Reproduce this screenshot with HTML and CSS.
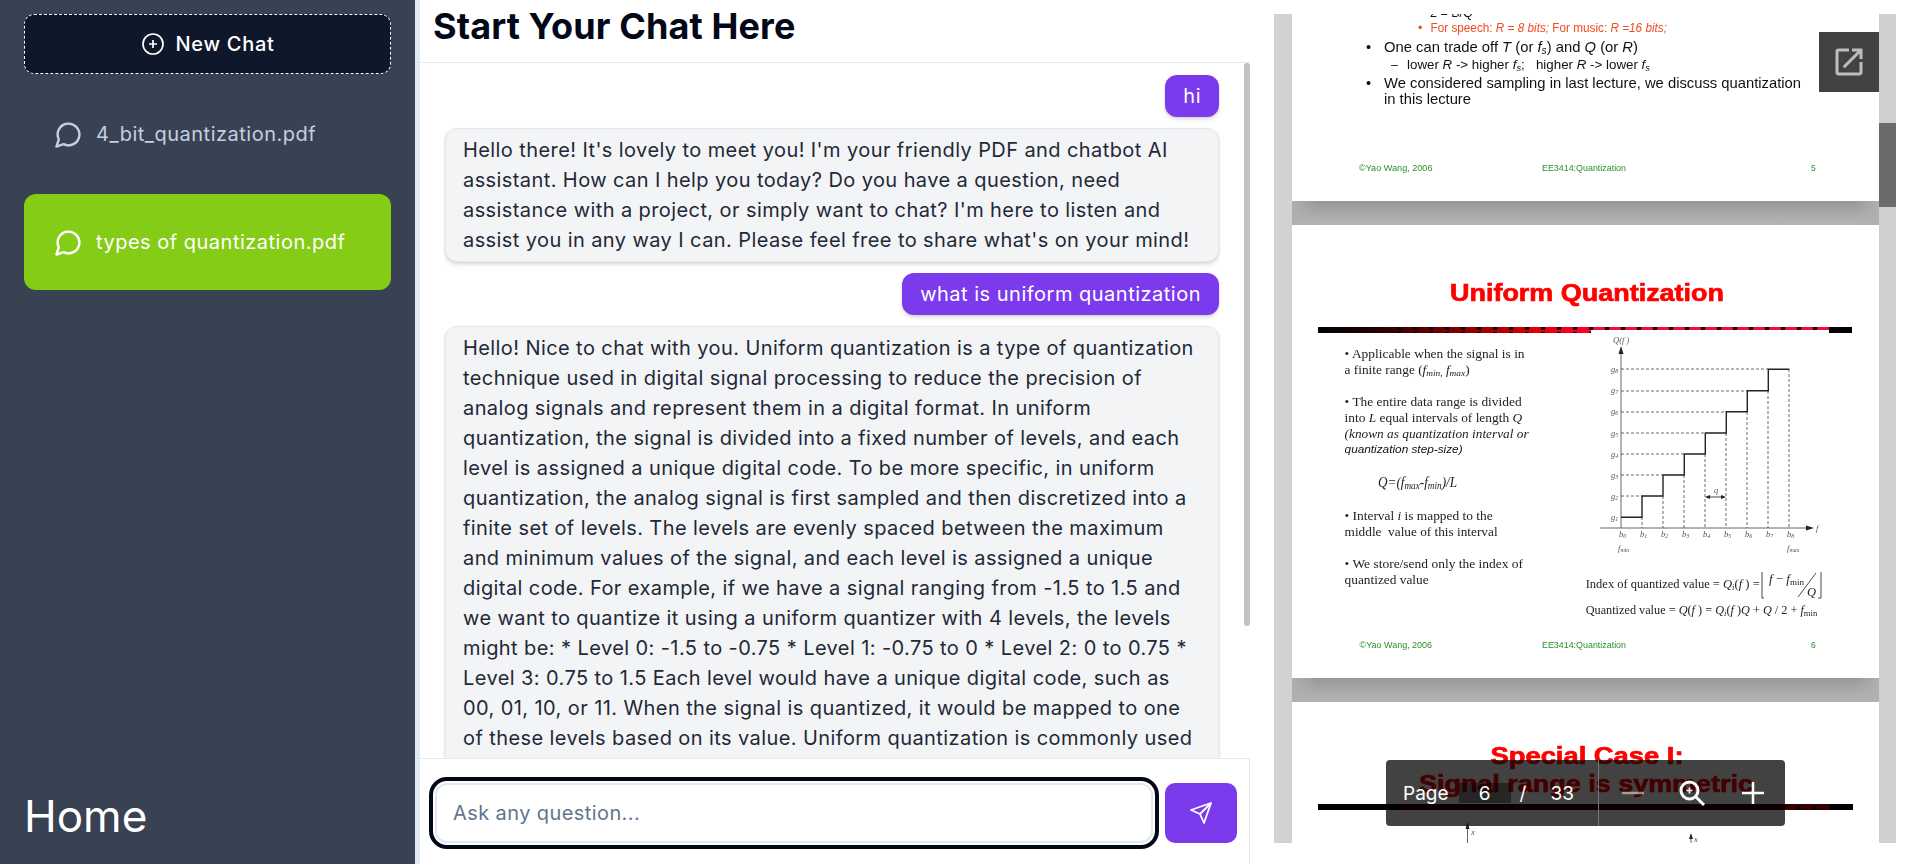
FILE: index.html
```html
<!DOCTYPE html>
<html lang="en">
<head>
    <meta charset="UTF-8">
    <meta name="viewport" content="width=device-width, initial-scale=1.0">
    <title>Chat with PDF</title>
    <link rel="stylesheet" href="styles.css">
</head>
<body>
    <aside class="sidebar">
        <div>
            <button type="button" class="new-chat">
                <svg class="new-chat-icon" viewBox="0 0 24 24"><circle cx="12" cy="12" r="10"/><path d="M8 12h8M12 8v8"/></svg>
                New Chat
            </button>
            <div class="file-item">
                <svg class="file-icon" viewBox="0 0 24 24"><path d="M7.9 20A9 9 0 1 0 4 16.1L2 22Z"/></svg>
                <span>4_bit_quantization.pdf</span>
            </div>
            <div class="file-item active">
                <svg class="file-icon" viewBox="0 0 24 24"><path d="M7.9 20A9 9 0 1 0 4 16.1L2 22Z"/></svg>
                <span>types of quantization.pdf</span>
            </div>
        </div>
        <a class="home-link">Home</a>
    </aside>

    <main class="chat">
        <h1 class="chat-title">Start Your Chat Here</h1>
        <div class="messages">
            <div class="msg user">hi</div>
            <div class="msg bot">Hello there! It's lovely to meet you! I'm your friendly PDF and chatbot AI assistant. How can I help you today? Do you have a question, need assistance with a project, or simply want to chat? I'm here to listen and assist you in any way I can. Please feel free to share what's on your mind!</div>
            <div class="msg user">what is uniform quantization</div>
            <div class="msg bot long">Hello! Nice to chat with you. Uniform quantization is a type of quantization technique used in digital signal processing to reduce the precision of analog signals and represent them in a digital format. In uniform quantization, the signal is divided into a fixed number of levels, and each level is assigned a unique digital code. To be more specific, in uniform quantization, the analog signal is first sampled and then discretized into a finite set of levels. The levels are evenly spaced between the maximum and minimum values of the signal, and each level is assigned a unique digital code. For example, if we have a signal ranging from -1.5 to 1.5 and we want to quantize it using a uniform quantizer with 4 levels, the levels might be: * Level 0: -1.5 to -0.75 * Level 1: -0.75 to 0 * Level 2: 0 to 0.75 * Level 3: 0.75 to 1.5 Each level would have a unique digital code, such as 00, 01, 10, or 11. When the signal is quantized, it would be mapped to one of these levels based on its value. Uniform quantization is commonly used</div>
            <div class="msg-scroll-thumb"></div>
        </div>
        <form class="ask-bar">
            <input type="text" class="ask-input" placeholder="Ask any question...">
            <button type="button" class="send-btn">
                <svg viewBox="0 0 24 24"><path d="m22 2-7 20-4-9-9-4Z"/><path d="M22 2 11 13"/></svg>
            </button>
        </form>
    </main>

    <section class="viewer">
        <div class="viewer-pages">
            <div class="pages">
                <svg class="slide" viewBox="1292 -252 587 453">
                    <g class="slide-ink">
                        <text x="1430" y="16.5" class="arial s12">2 = B/Q</text>
                        <text x="1418" y="32" class="arial s12 orange">•</text>
                        <text x="1430.5" y="32" class="arial s12 orange" textLength="236.5" lengthAdjust="spacingAndGlyphs">For speech: <tspan class="it">R = 8 bits;</tspan> For music: <tspan class="it">R =16 bits;</tspan></text>
                        <text x="1366" y="52" class="arial s14">•</text>
                        <text x="1384" y="52" class="arial s14" textLength="254" lengthAdjust="spacingAndGlyphs">One can trade off <tspan class="it">T</tspan> (or <tspan class="it">f</tspan><tspan class="it sub" dy="2">s</tspan><tspan dy="-2">)</tspan> and <tspan class="it">Q</tspan> (or <tspan class="it">R</tspan>)</text>
                        <text x="1391" y="69" class="arial s12">–</text>
                        <text x="1407" y="69" class="arial s12 keep" textLength="243" lengthAdjust="spacingAndGlyphs">lower <tspan class="it">R</tspan> -&gt; higher <tspan class="it">f</tspan><tspan class="it sub" dy="2">s</tspan><tspan dy="-2">;   higher </tspan><tspan class="it">R</tspan> -&gt; lower <tspan class="it">f</tspan><tspan class="it sub" dy="2">s</tspan></text>
                        <text x="1366" y="88" class="arial s14">•</text>
                        <text x="1384" y="88" class="arial s14" textLength="417" lengthAdjust="spacingAndGlyphs">We considered sampling in last lecture, we discuss quantization</text>
                        <text x="1384" y="104" class="arial s14" textLength="87" lengthAdjust="spacingAndGlyphs">in this lecture</text>
                        <text x="1359" y="171" class="arial s8 green" textLength="73.5" lengthAdjust="spacingAndGlyphs">©Yao Wang, 2006</text>
                        <text x="1542" y="171" class="arial s8 green" textLength="84" lengthAdjust="spacingAndGlyphs">EE3414:Quantization</text>
                        <text x="1811" y="171" class="arial s8 green">5</text>
                    </g>
                </svg>
                <div class="page-gap"></div>

                <svg class="slide" viewBox="1292 225 587 453">
                    <defs>
                        <linearGradient id="ruleFade" x1="0" x2="1" y1="0" y2="0">
                            <stop offset="0" stop-color="#000"/>
                            <stop offset="0.2" stop-color="#200000"/>
                            <stop offset="0.55" stop-color="#8a0000"/>
                            <stop offset="0.8" stop-color="#e00000"/>
                            <stop offset="1" stop-color="#ff0030"/>
                        </linearGradient>
                        <pattern id="ruleDots" width="16" height="6" patternUnits="userSpaceOnUse">
                            <circle cx="7" cy="4" r="2.3" fill="#0a0014"/>
                        </pattern>
                    </defs>
                    <rect x="1318" y="327" width="273" height="6" fill="url(#ruleFade)"/>
                    <rect x="1390" y="327" width="201" height="6" fill="url(#ruleDots)"/>
                    <rect x="1591" y="327" width="238" height="3" fill="#f0103a"/>
                    <rect x="1591" y="327" width="238" height="3" fill="url(#ruleDots)"/>
                    <rect x="1829" y="327" width="23" height="6" fill="#000"/>
                    <g class="slide-ink">
                        <text x="1587" y="301" class="title" text-anchor="middle" textLength="274" lengthAdjust="spacingAndGlyphs">Uniform Quantization</text>

                        <text x="1344.6" y="358" class="times" textLength="180" lengthAdjust="spacingAndGlyphs">• Applicable when the signal is in</text>
                        <text x="1344.6" y="374" class="times" textLength="125" lengthAdjust="spacingAndGlyphs">a finite range (<tspan class="it">f</tspan><tspan class="it sub" dy="2">min,</tspan><tspan class="it" dy="-2"> f</tspan><tspan class="it sub" dy="2">max</tspan><tspan dy="-2">)</tspan></text>
                        <text x="1344.6" y="406" class="times" textLength="177" lengthAdjust="spacingAndGlyphs">• The entire data range is divided</text>
                        <text x="1344.6" y="422" class="times" textLength="177.5" lengthAdjust="spacingAndGlyphs">into <tspan class="it">L</tspan> equal intervals of length <tspan class="it">Q</tspan></text>
                        <text x="1344.6" y="438" class="times it" textLength="184" lengthAdjust="spacingAndGlyphs">(known as quantization interval or</text>
                        <text x="1344.6" y="453" class="arial s11 it" textLength="118" lengthAdjust="spacingAndGlyphs">quantization step-size)</text>
                        <text x="1378" y="487" class="times s14 it" textLength="79" lengthAdjust="spacingAndGlyphs">Q=(f<tspan class="sub" dy="2">max</tspan><tspan dy="-2">-f</tspan><tspan class="sub" dy="2">min</tspan><tspan dy="-2">)/L</tspan></text>
                        <text x="1344.6" y="520" class="times" textLength="148" lengthAdjust="spacingAndGlyphs">• Interval <tspan class="it">i</tspan> is mapped to the</text>
                        <text x="1344.6" y="536" class="times keep" textLength="153" lengthAdjust="spacingAndGlyphs">middle  value of this interval</text>
                        <text x="1344.6" y="568" class="times" textLength="178.5" lengthAdjust="spacingAndGlyphs">• We store/send only the index of</text>
                        <text x="1344.6" y="584" class="times" textLength="84" lengthAdjust="spacingAndGlyphs">quantized value</text>

                        <path class="chart-axis" d="M1621 528V352M1600 528H1806"/>
                        <path class="chart-head" d="M1621 346l-2.5 8h5zM1814 528l-8-2.5v5z"/>
                        <path class="chart-dash" d="M1621 496H1642M1621 475H1663M1621 454H1684M1621 433H1705M1621 412H1726M1621 391H1747M1621 369H1768"/>
                        <path class="chart-dash" d="M1642 517V528M1663 496V528M1684 475V528M1705 454V528M1726 433V528M1747 412V528M1768 391V528M1789 369V528"/>
                        <path class="chart-step" d="M1621 517.3H1642V496H1663V475H1684.3V454H1705.3V433H1726.3V411.7H1747.3V390.7H1768.3V369.3H1789.3"/>
                        <path class="chart-q" d="M1707 497H1724"/>
                        <path class="chart-head" d="M1705 497l5-2v4zM1726 497l-5-2v4z"/>
                        <text x="1613" y="343" class="times s8 it">Q(f )</text>
                        <text x="1611" y="372" class="times s8 it">g<tspan class="sub" dy="1">8</tspan></text>
                        <text x="1611" y="393" class="times s8 it">g<tspan class="sub" dy="1">7</tspan></text>
                        <text x="1611" y="414" class="times s8 it">g<tspan class="sub" dy="1">6</tspan></text>
                        <text x="1611" y="436" class="times s8 it">g<tspan class="sub" dy="1">5</tspan></text>
                        <text x="1611" y="457" class="times s8 it">g<tspan class="sub" dy="1">4</tspan></text>
                        <text x="1611" y="478" class="times s8 it">g<tspan class="sub" dy="1">3</tspan></text>
                        <text x="1611" y="499" class="times s8 it">g<tspan class="sub" dy="1">2</tspan></text>
                        <text x="1611" y="520" class="times s8 it">g<tspan class="sub" dy="1">1</tspan></text>
                        <text x="1619" y="537" class="times s8 it">b<tspan class="sub" dy="1">0</tspan></text>
                        <text x="1640" y="537" class="times s8 it">b<tspan class="sub" dy="1">1</tspan></text>
                        <text x="1661" y="537" class="times s8 it">b<tspan class="sub" dy="1">2</tspan></text>
                        <text x="1682" y="537" class="times s8 it">b<tspan class="sub" dy="1">3</tspan></text>
                        <text x="1703" y="537" class="times s8 it">b<tspan class="sub" dy="1">4</tspan></text>
                        <text x="1724" y="537" class="times s8 it">b<tspan class="sub" dy="1">5</tspan></text>
                        <text x="1745" y="537" class="times s8 it">b<tspan class="sub" dy="1">6</tspan></text>
                        <text x="1766" y="537" class="times s8 it">b<tspan class="sub" dy="1">7</tspan></text>
                        <text x="1787" y="537" class="times s8 it">b<tspan class="sub" dy="1">8</tspan></text>
                        <text x="1618" y="551" class="times s8 it">f<tspan class="sub" dy="1">min</tspan></text>
                        <text x="1787" y="551" class="times s8 it">f<tspan class="sub" dy="1">max</tspan></text>
                        <text x="1714" y="493" class="times s8 it">q</text>
                        <text x="1816" y="531" class="times s8 it">f</text>

                        <text x="1585.7" y="588" class="times" textLength="174" lengthAdjust="spacingAndGlyphs">Index of quantized value = <tspan class="it">Q</tspan><tspan class="it sub" dy="2">i</tspan><tspan dy="-2">(</tspan><tspan class="it">f</tspan> ) =</text>
                        <path class="chart-bracket" d="M1764 598H1762V572M1818 598H1821V572M1798 597L1816 573"/>
                        <text x="1769" y="583" class="times" textLength="35" lengthAdjust="spacingAndGlyphs"><tspan class="it">f</tspan> − <tspan class="it">f</tspan><tspan class="sub" dy="2">min</tspan></text>
                        <text x="1807" y="596" class="times it">Q</text>
                        <text x="1585.7" y="614" class="times" textLength="231.5" lengthAdjust="spacingAndGlyphs">Quantized value = <tspan class="it">Q</tspan>(<tspan class="it">f</tspan> ) = <tspan class="it">Q</tspan><tspan class="it sub" dy="2">i</tspan><tspan dy="-2">(</tspan><tspan class="it">f</tspan> )<tspan class="it">Q</tspan> + <tspan class="it">Q</tspan> / 2 + <tspan class="it">f</tspan><tspan class="sub" dy="2">min</tspan></text>

                        <text x="1359.6" y="648" class="arial s8 green" textLength="72.5" lengthAdjust="spacingAndGlyphs">©Yao Wang, 2006</text>
                        <text x="1542" y="648" class="arial s8 green" textLength="84" lengthAdjust="spacingAndGlyphs">EE3414:Quantization</text>
                        <text x="1811" y="648" class="arial s8 green">6</text>
                    </g>
                </svg>
                <div class="page-gap"></div>

                <svg class="slide" viewBox="1292 702 587 453">
                    <g class="slide-ink">
                        <text x="1587" y="764" class="title" text-anchor="middle" textLength="193" lengthAdjust="spacingAndGlyphs">Special Case I:</text>
                        <text x="1586" y="792" class="title" text-anchor="middle" textLength="334" lengthAdjust="spacingAndGlyphs">Signal range is symmetric</text>
                        <text x="1471" y="835" class="times s8 it">x</text>
                        <text x="1694" y="842" class="times s8 it">x</text>
                    </g>
                    <rect x="1318" y="804" width="535" height="6" fill="#000"/>
                    <rect x="1400" y="804" width="430" height="6" fill="#7a0000" opacity="0.45"/>
                    <rect x="1400" y="804" width="430" height="6" fill="url(#ruleDots)"/>
                    <path class="chart-axis" d="M1467.5 826V846M1691 836V846"/>
                    <path class="chart-head" d="M1467.5 822l-2 7h4zM1691 833l-2 6h4z"/>
                </svg>
            </div>
            <div class="zoom-bar">
                <div class="zoom-pages">
                    <span class="page-label">Page</span>
                    <span class="page-box">6</span>
                    <span class="page-sep">/</span>
                    <span class="page-total">33</span>
                </div>
                <div class="zoom-tools">
                    <svg class="zoom-minus" viewBox="0 0 22 22"><path d="M0 11h22"/></svg>
                    <svg class="zoom-glass" viewBox="0 0 26 26"><circle cx="10.5" cy="10.5" r="8.5"/><path d="M16.5 16.5 25 25"/><path class="thin" d="M7.5 10.5h6M10.5 7.5v6"/></svg>
                    <svg class="zoom-plus" viewBox="0 0 22 22"><path d="M0 11h22M11 0v22"/></svg>
                </div>
            </div>
            <button type="button" class="open-btn">
                <svg viewBox="0 0 24 24"><path d="M19 19H5V5h7V3H5a2 2 0 0 0-2 2v14a2 2 0 0 0 2 2h14c1.1 0 2-.9 2-2v-7h-2v7zM14 3v2h3.59l-9.83 9.83 1.41 1.41L19 6.41V10h2V3h-7z"/></svg>
            </button>
        </div>
        <div class="viewer-scroll"><div class="viewer-thumb"></div></div>
    </section>
</body>
</html>
```

FILE: styles.css
```css
* {
  box-sizing: border-box;
}

html, body {
  height: 100%;
}

body {
  margin: 0;
  display: flex;
  height: 864px;
  overflow: hidden;
  background: #ffffff;
  font-family: Inter, sans-serif;
  color: #020817;
}

/* left column */
.sidebar {
  width: 420px;
  flex: none;
  display: flex;
  flex-direction: column;
  justify-content: space-between;
  padding: 14px 24px 19px 24px;
  background: #394253;
  border-right: 5px solid #e2e8f0;
}

.new-chat {
  width: 100%;
  height: 60px;
  display: flex;
  justify-content: center;
  align-items: center;
  gap: 11px;
  background: #0f172a;
  border: 1px dashed #ffffff;
  border-radius: 10px;
  color: #ffffff;
  font-family: Inter, sans-serif;
  font-size: 20px;
  font-weight: 500;
  letter-spacing: 0.7px;
}

.new-chat-icon {
  width: 24px;
  height: 24px;
  fill: none;
  stroke: #ffffff;
  stroke-width: 1.7;
}

.file-item {
  height: 96px;
  margin-top: 12px;
  padding-left: 30px;
  display: flex;
  align-items: center;
  gap: 13px;
  border-radius: 12px;
  color: #c3d0e2;
  font-size: 20px;
  letter-spacing: 0.5px;
}

.file-item.active {
  background: #84cc16;
  color: #ffffff;
}

.file-icon {
  width: 29px;
  height: 29px;
  fill: none;
  stroke: currentColor;
  stroke-width: 2;
  stroke-linejoin: round;
}

.home-link {
  color: #ffffff;
  font-size: 44px;
  line-height: 58px;
}

/* middle column */
.chat {
  width: 830px;
  flex: none;
  display: flex;
  flex-direction: column;
}

.chat-title {
  margin: 0;
  height: 63px;
  padding-left: 13px;
  border-bottom: 1px solid #e2e8f0;
  font-size: 36px;
  font-weight: 700;
  line-height: 52px;
  letter-spacing: 0.12px;
}

.messages {
  position: relative;
  flex: 1;
  min-height: 0;
  overflow: hidden;
  display: flex;
  flex-direction: column;
  align-items: flex-end;
  gap: 11px;
  padding: 12px 31px 0 25px;
}

.msg {
  flex: none;
  padding: 6px 18px;
  border-radius: 12px;
  font-size: 20px;
  line-height: 30px;
  letter-spacing: 0.41px;
  box-shadow: 0 3px 5px -1px rgba(0, 0, 0, 0.14), 0 1px 3px rgba(0, 0, 0, 0.08);
}

.msg.user {
  background: #7c3aed;
  color: #ffffff;
  letter-spacing: 0.5px;
}

.msg.bot {
  width: 100%;
  padding: 6px 17px;
  background: #f3f4f6;
  border: 1px solid #e5e7eb;
  color: #1f2937;
}

.msg.long {
  min-height: 600px;
}

.msg-scroll-thumb {
  position: absolute;
  top: 0;
  right: 0;
  width: 6px;
  height: 563px;
  border-radius: 3px;
  background: #c1c1c1;
}

.ask-bar {
  height: 106px;
  flex: none;
  display: flex;
  gap: 12px;
  padding: 24px 12px 0 15px;
  border-top: 1px solid #e2e8f0;
  border-right: 1px solid #e2e8f0;
  background: #ffffff;
}

.ask-input {
  flex: 1;
  height: 60px;
  padding: 0 16px;
  border: 2px solid #e2e8f0;
  border-radius: 12px;
  outline: 4px solid #020817;
  outline-offset: 2px;
  font-family: Inter, sans-serif;
  font-size: 20px;
  letter-spacing: 0.41px;
}

.ask-input::placeholder {
  color: #64748b;
}

.send-btn {
  width: 72px;
  height: 60px;
  padding: 0;
  display: flex;
  justify-content: center;
  align-items: center;
  border: none;
  border-radius: 10px;
  background: #7c3aed;
}

.send-btn svg {
  width: 24px;
  height: 24px;
  fill: none;
  stroke: #ffffff;
  stroke-width: 1.8;
  stroke-linejoin: round;
}

/* pdf viewer */
.viewer {
  width: 622px;
  height: 829px;
  flex: none;
  display: flex;
  margin: 14px 0 0 24px;
  background: #d2d2d2;
}

.viewer-pages {
  position: relative;
  flex: 1;
  overflow: hidden;
  padding-left: 18px;
}

.pages {
  display: flex;
  flex-direction: column;
  margin-top: -266px;
}

.slide {
  display: block;
  width: 587px;
  height: 453px;
  flex: none;
  background: #ffffff;
}

.page-gap {
  width: 587px;
  height: 24px;
  flex: none;
  background:
    linear-gradient(to right, #b0b0b0, transparent 24px, transparent calc(100% - 24px), #b0b0b0),
    linear-gradient(#989898, #b2b2b2 85%);
}

.slide-ink {
  filter: blur(0.45px);
}

.keep {
  white-space: pre;
}

.arial {
  font-family: "Liberation Sans", sans-serif;
  fill: #111111;
}

.times {
  font-family: "Liberation Serif", serif;
  font-size: 12.5px;
  fill: #222222;
}

.title {
  font-family: "Liberation Sans", sans-serif;
  font-size: 24px;
  font-weight: 700;
  fill: #ff0000;
  stroke: #ff0000;
  stroke-width: 0.7px;
}

.s8 {
  font-size: 8.5px;
}

.times.s8 {
  fill: #555555;
}

.s11 {
  font-size: 11px;
}

.s12 {
  font-size: 12.5px;
}

.s14 {
  font-size: 14.5px;
}

.it {
  font-style: italic;
}

.sub {
  font-size: 70%;
}

.orange {
  fill: #f04a20;
}

.green {
  fill: #2a8f2a;
}

.chart-axis {
  fill: none;
  stroke: #666666;
  stroke-width: 1;
}

.chart-head {
  fill: #222222;
}

.chart-dash {
  fill: none;
  stroke: #444444;
  stroke-width: 0.8;
  stroke-dasharray: 3 2;
}

.chart-step {
  fill: none;
  stroke: #222222;
  stroke-width: 1.4;
}

.chart-q, .chart-bracket {
  fill: none;
  stroke: #333333;
  stroke-width: 0.9;
}

.zoom-bar {
  position: absolute;
  left: 112px;
  top: 746px;
  width: 399px;
  height: 66px;
  display: flex;
  border-radius: 4px;
  background: rgba(0, 0, 0, 0.74);
  color: #ffffff;
  font-size: 19px;
}

.zoom-pages {
  width: 213px;
  flex: none;
  display: flex;
  align-items: center;
  padding-left: 17px;
  border-right: 1px solid #777777;
}

.page-box {
  width: 52px;
  height: 20px;
  margin-left: 10px;
  display: flex;
  justify-content: center;
  align-items: center;
  background: rgba(0, 0, 0, 0.42);
}

.page-sep {
  margin-left: 9px;
}

.page-total {
  margin-left: 24px;
}

.zoom-tools {
  position: relative;
  flex: 1;
}

.zoom-tools svg {
  position: absolute;
  fill: none;
  stroke: #ffffff;
}

.zoom-minus {
  left: 23px;
  top: 22px;
  width: 22px;
  height: 22px;
  stroke-width: 2.5;
  opacity: 0.5;
}

.zoom-glass {
  left: 80px;
  top: 20px;
  width: 26px;
  height: 26px;
  stroke-width: 3;
}

.zoom-glass .thin {
  stroke-width: 1.6;
}

.zoom-plus {
  left: 143px;
  top: 22px;
  width: 22px;
  height: 22px;
  stroke-width: 2.5;
}

.open-btn {
  position: absolute;
  top: 18px;
  right: 0;
  width: 60px;
  height: 60px;
  padding: 0;
  display: flex;
  justify-content: center;
  align-items: center;
  border: none;
  background: #424242;
}

.open-btn svg {
  width: 36px;
  height: 36px;
  fill: #bdbdbd;
}

.viewer-scroll {
  width: 17px;
  flex: none;
  padding-top: 109px;
  background: #cfcfcf;
}

.viewer-thumb {
  height: 84px;
  background: #6b6b6b;
}
```
